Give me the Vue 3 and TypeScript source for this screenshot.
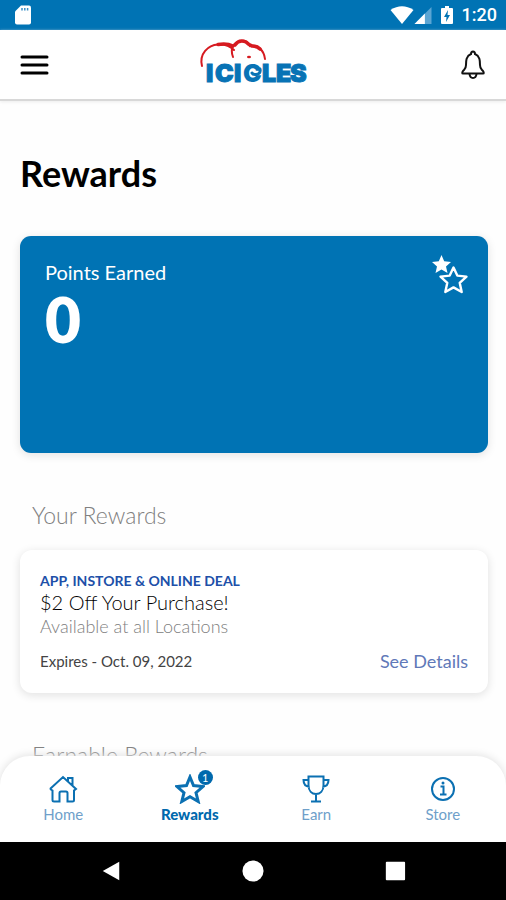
<script setup lang="ts">
import { ref } from 'vue'

interface Reward {
  kind: string
  title: string
  place: string
  expires: string
}

interface Tab {
  id: string
  label: string
  badge?: number
}

const points = ref<number>(0)
const active = ref<string>('rewards')

const rewards: Reward[] = [
  {
    kind: 'APP, INSTORE & ONLINE DEAL',
    title: '$2 Off Your Purchase!',
    place: 'Available at all Locations',
    expires: 'Expires - Oct. 09, 2022',
  },
]

const tabs: Tab[] = [
  { id: 'home', label: 'Home' },
  { id: 'rewards', label: 'Rewards', badge: 1 },
  { id: 'earn', label: 'Earn' },
  { id: 'store', label: 'Store' },
]
</script>

<template>
  <div class="screen">
    <div class="status">
      <svg class="sd" viewBox="0 0 16 20" aria-hidden="true">
        <path d="M6 0.5H14Q16 0.5 16 2.5V17.5Q16 19.5 14 19.5H2Q0 19.5 0 17.5V6.5Z" fill="#fff" />
        <path d="M7 3v2.500M9.800 3v2.500M12.600 3v2.500" stroke="#3b8fc6" stroke-width="1.500" />
      </svg>
      <div class="status-right">
        <svg class="wifi" viewBox="0 0 24 18" aria-hidden="true">
          <path d="M0.500 4Q12 -3.500 23.500 4L12 18Z" fill="#fff" />
        </svg>
        <svg class="signal" viewBox="0 0 18 18" aria-hidden="true">
          <path d="M18 0V18H0Z" fill="#5ba5d3" />
          <path d="M11 7V18H0Z" fill="#fff" />
        </svg>
        <svg class="battery" viewBox="0 0 12 18" aria-hidden="true">
          <path d="M4 0H8V2H11Q12 2 12 3V17Q12 18 11 18H1Q0 18 0 17V3Q0 2 1 2H4Z" fill="#fff" />
          <path d="M7 4L3 11H5.500L5 16L9 9H6.500Z" fill="#0073b4" />
        </svg>
        <span class="clock">1:20</span>
      </div>
    </div>

    <header class="header">
      <button class="icon-button" type="button" aria-label="Menu">
        <svg class="menu-icon" viewBox="0 0 28 20" aria-hidden="true">
          <path d="M1.500 2H26.500M1.500 10H26.500M1.500 18H26.500" stroke="#000" stroke-width="3" stroke-linecap="round" />
        </svg>
      </button>
      <svg class="logo" viewBox="0 0 120 54" role="img" aria-label="Icicles">
        <g fill="none" stroke="#d61a20" stroke-linecap="round">
          <path d="M7 28C4 16 13 7 23 6.500C30 6 35 8 39 12" stroke-width="2" />
          <path d="M23 6.500Q32 5 38 8" stroke-width="3.500" />
          <path d="M38 19C35 11 38 4 46 3C51 2 54 5 55 8C62 6 69 12 70 21" stroke-width="2" />
          <path d="M40 7Q44 1 51 4Q54 7 57 8Q62 8 65 11" stroke-width="3.500" />
        </g>
        <ellipse cx="54" cy="19" rx="2" ry="1.200" fill="#d61a20" />
        <g class="logo-text">
          <text x="11" y="44">I</text>
          <text x="20" y="44">C</text>
          <text x="39" y="44">I</text>
          <text class="logo-swirl" x="48" y="44">C</text>
          <text x="67" y="44">L</text>
          <text x="81" y="44">E</text>
          <text x="95" y="44">S</text>
        </g>
        <path d="M65 31Q66 36 61 36.500Q58 37 57 35" fill="none" stroke="#0873b5" stroke-width="3" stroke-linecap="round" />
      </svg>
      <button class="icon-button" type="button" aria-label="Notifications">
        <svg class="bell" viewBox="0 0 26 30" aria-hidden="true">
          <path d="M11 4Q11 1.500 13 1.500Q15 1.500 15 4C20 6 20 11 20 15C20 19 21 19 23 21Q24.500 23.500 23 23.500H3Q1.500 23.500 3 21C5 19 6 19 6 15C6 11 6 6 11 4Z" />
          <path d="M9.500 24Q10 28 13 28Q16 28 16.500 24" />
        </svg>
      </button>
    </header>

    <main class="content">
      <h1>Rewards</h1>

      <section class="points">
        <div>
          <p class="points-label">Points Earned</p>
          <p class="points-value">{{ points }}</p>
        </div>
        <svg class="stars" viewBox="0 0 38 42" aria-hidden="true">
          <path d="M10.500 1L13.200 7.200L20 7.900L15 12.500L16.500 19L10.500 15.600L4.500 19L6 12.500L1 7.900L7.800 7.200Z" fill="#fff" />
          <path d="M22.500 13.500L26.300 21.600L35.500 22.600L28.700 28.800L30.700 38L22.500 33.400L14.300 38L16.300 28.800L9.500 22.600L18.700 21.600Z" fill="#0073b4" stroke="#fff" stroke-width="2.400" stroke-linejoin="round" />
        </svg>
      </section>

      <h2>Your Rewards</h2>
      <article v-for="reward in rewards" :key="reward.title" class="reward">
        <p class="kind">{{ reward.kind }}</p>
        <h3>{{ reward.title }}</h3>
        <p class="place">{{ reward.place }}</p>
        <div class="reward-foot">
          <span class="expires">{{ reward.expires }}</span>
          <a class="details" href="#details">See Details</a>
        </div>
      </article>

      <h2>Earnable Rewards</h2>
    </main>

    <nav class="tabs" aria-label="Main">
      <button
        v-for="tab in tabs"
        :key="tab.id"
        type="button"
        class="tab"
        :class="{ active: active === tab.id }"
        @click="active = tab.id"
      >
        <span class="tab-icon">
          <svg v-if="tab.id === 'home'" viewBox="0 0 30 30" aria-hidden="true">
            <path d="M2 15L15 3L28 15L26 16.500V26Q26 27.500 24.500 27.500H19.500V19Q19.500 17.500 18 17.500H13Q11.500 17.500 11.500 19V27.500H6Q4.500 27.500 4.500 26V16.500L2 15M20 7V4H24.500V11.500" />
          </svg>
          <svg v-else-if="tab.id === 'rewards'" viewBox="0 0 30 30" aria-hidden="true">
            <path class="bold" d="M15 3L18.500 11.600L28 12.500L21 18.700L23.200 27.500L15 22.800L6.800 27.500L9 18.700L2 12.500L11.500 11.600Z" />
          </svg>
          <svg v-else-if="tab.id === 'earn'" viewBox="0 0 30 30" aria-hidden="true">
            <path d="M7.500 2.500H22.500V11C22.500 17 19 20 15 20C11 20 7.500 17 7.500 11ZM15 20V27.500M10 27.500H20M7.500 6H2.500C2.500 11 5 12.500 8.500 13M22.500 6H27.500C27.500 11 25 12.500 21.500 13" />
          </svg>
          <svg v-else viewBox="0 0 30 30" aria-hidden="true">
            <circle cx="15" cy="15" r="11" />
            <path d="M12.500 12.500H15.500V20M12 20.500H18.500" />
            <circle class="dot" cx="15" cy="9" r="1.500" />
          </svg>
          <span v-if="tab.badge" class="badge">{{ tab.badge }}</span>
        </span>
        <span>{{ tab.label }}</span>
      </button>
    </nav>

    <div class="system">
      <button type="button" aria-label="Back">
        <svg viewBox="0 0 24 24" aria-hidden="true"><path d="M3 12L21 2V22Z" /></svg>
      </button>
      <button type="button" aria-label="Home screen">
        <svg viewBox="0 0 24 24" aria-hidden="true"><circle cx="12" cy="12" r="11.500" /></svg>
      </button>
      <button type="button" aria-label="Recent apps">
        <svg viewBox="0 0 24 24" aria-hidden="true"><rect x="2" y="2" width="21" height="20" rx="1" /></svg>
      </button>
    </div>
  </div>
</template>

<style>
body {
  margin: 0;
  background: #fff;
}
</style>

<style scoped>
.screen {
  display: flex;
  flex-direction: column;
  height: 100vh;
  overflow: hidden;
  background: #fefefe;
  color: #000;
  font-family: Lato, 'Open Sans', sans-serif;
}

p,
h1,
h2,
h3 {
  margin: 0;
}

button {
  padding: 0;
  border: 0;
  background: none;
  font: inherit;
  cursor: pointer;
}

svg {
  display: block;
  flex: none;
}

.status {
  flex: none;
  display: flex;
  align-items: center;
  justify-content: space-between;
  height: 30px;
  padding: 0 9px 0 15px;
  background: #0073b4;
}

.sd {
  width: 16px;
  height: 20px;
}

.status-right {
  display: flex;
  align-items: center;
}

.wifi {
  width: 24px;
  height: 18px;
}

.signal {
  width: 18px;
  height: 17px;
}

.battery {
  width: 12px;
  height: 18px;
  margin: 0 9px;
}

.clock {
  color: #fff;
  font: 500 18px/30px Roboto, sans-serif;
}

.header {
  flex: none;
  position: relative;
  z-index: 1;
  display: flex;
  align-items: center;
  justify-content: space-between;
  box-sizing: border-box;
  height: 71px;
  padding: 0 20px;
  border-bottom: 2px solid #d8d8d8;
  background: #fff;
  box-shadow: 0 1px 3px #ececec;
}

.menu-icon {
  width: 29px;
  height: 20px;
}

.logo {
  width: 120px;
  height: 54px;
  overflow: visible;
}

.logo-text {
  fill: #0873b5;
  stroke: #0873b5;
  stroke-width: 1px;
  font: 900 25px Inter, sans-serif;
}

.logo-swirl {
  stroke-width: 0;
}

.bell {
  width: 26px;
  height: 30px;
  fill: none;
  stroke: #111;
  stroke-width: 2;
}

.content {
  flex: 1;
  min-height: 0;
  overflow-y: auto;
  padding: 0 18px 48px 20px;
  scrollbar-width: none;
}

h1 {
  margin: 51px 0 41px;
  font-size: 36px;
  font-weight: 700;
  line-height: 43px;
}

.points {
  display: flex;
  justify-content: space-between;
  box-sizing: border-box;
  min-height: 217px;
  padding: 24px 19px 24px 25px;
  border-radius: 11px;
  background: #0073b4;
  box-shadow: 0 2px 10px #e2e2e2;
  color: #fff;
}

.points-label {
  font-size: 20px;
  line-height: 24px;
}

.points-value {
  font-size: 62px;
  font-weight: 800;
  line-height: 70px;
}

.stars {
  width: 38px;
  height: 42px;
  margin-top: -6px;
}

h2 {
  margin: 48px 12px 20px;
  color: #808080;
  font-size: 23px;
  font-weight: 300;
  line-height: 29px;
}

.reward {
  padding: 22px 20px 20px;
  border-radius: 12px;
  background: #fff;
  box-shadow: 0 2px 10px #e0e0e0;
}

.kind {
  color: #204fa8;
  font-size: 14px;
  font-weight: 700;
  line-height: 18px;
}

h3 {
  font-size: 20px;
  font-weight: 300;
  line-height: 24px;
}

.place {
  color: #808080;
  font-size: 18px;
  font-weight: 300;
  line-height: 24px;
}

.reward-foot {
  display: flex;
  align-items: center;
  justify-content: space-between;
  margin-top: 11px;
  line-height: 24px;
}

.expires {
  color: #444;
  font-size: 15px;
}

.details {
  color: #6078b8;
  font-size: 18px;
  text-decoration: none;
}

.tabs {
  flex: none;
  position: relative;
  display: grid;
  grid-template-columns: repeat(4, 1fr);
  box-sizing: border-box;
  height: 86px;
  margin-top: -30px;
  padding-top: 18px;
  border-radius: 30px 30px 0 0;
  background: #fff;
  box-shadow: 0 -1px 8px #e2e2e2;
}

.tab {
  display: flex;
  flex-direction: column;
  align-items: center;
  color: #6f9fca;
  font-size: 15px;
  line-height: 20px;
}

.tab.active {
  color: #0069ad;
  font-weight: 900;
}

.tab-icon {
  position: relative;
  width: 30px;
  height: 30px;
}

.tab-icon svg {
  width: 30px;
  height: 30px;
  fill: none;
  stroke: #0b70b2;
  stroke-width: 2px;
}

.tab-icon .bold {
  stroke-width: 3px;
}

.tab-icon .dot {
  fill: #0b70b2;
  stroke: none;
}

.badge {
  position: absolute;
  top: -4px;
  right: -8px;
  width: 15px;
  height: 15px;
  border-radius: 50%;
  background: #0069ad;
  color: #fff;
  font-size: 11px;
  font-weight: 400;
  line-height: 15px;
  text-align: center;
}

.system {
  flex: none;
  position: relative;
  display: flex;
  align-items: center;
  justify-content: space-around;
  height: 58px;
  padding: 0 40px;
  background: #000;
}

.system svg {
  width: 22px;
  height: 22px;
  fill: #fff;
}
</style>
